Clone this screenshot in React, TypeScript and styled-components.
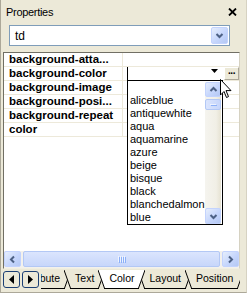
import React from "react";
import styled, { createGlobalStyle } from "styled-components";

const GlobalStyle = createGlobalStyle`
  html, body {
    margin: 0;
    padding: 0;
    background: #ece9d8;
  }
  * {
    box-sizing: border-box;
  }
`;

const FONT = `"Liberation Sans", Arial, sans-serif`;

const colorNames = [
  "",
  "aliceblue",
  "antiquewhite",
  "aqua",
  "aquamarine",
  "azure",
  "beige",
  "bisque",
  "black",
  "blanchedalmon",
  "blue",
];

const properties = [
  "background-atta...",
  "background-color",
  "background-image",
  "background-posi...",
  "background-repeat",
  "color",
];

const tabs = ["Attribute", "Text", "Color", "Layout", "Position"];

const Panel = styled.div`
  width: 247px;
  height: 293px;
  background: #ece9d8;
  border-left: 1px solid #aca899;
  border-right: 1px solid #d6d2c2;
  border-bottom: 1px solid #aca899;
  display: flex;
  flex-direction: column;
  font-family: ${FONT};
  color: #000;
  overflow: hidden;
`;

const TitleBar = styled.div`
  height: 22px;
  display: flex;
  align-items: center;
  justify-content: space-between;
  padding: 1px 9px 0 5px;
  font-size: 11px;
  letter-spacing: -0.3px;
`;

const CloseButton = styled.svg`
  width: 9px;
  height: 8px;
`;

const ComboRow = styled.div`
  padding: 3px 16px 6px 8px;
`;

const Combo = styled.div`
  height: 21px;
  background: #fff;
  border: 1px solid #7f9db9;
  display: flex;
  align-items: center;
  justify-content: space-between;
  padding: 1px;
`;

const ComboText = styled.span`
  font-size: 12px;
  padding-left: 4px;
`;

const XpButton = styled.div<{ $w: number; $h: number }>`
  width: ${(p) => p.$w}px;
  height: ${(p) => p.$h}px;
  border: 1px solid #c3d3fd;
  border-radius: 2px;
  background: linear-gradient(135deg, #e6eefc 0%, #c6d6fc 55%, #b4c8f4 100%);
  display: flex;
  align-items: center;
  justify-content: center;
  flex-shrink: 0;
`;

const Grid = styled.div`
  margin: 0 6px 0 2px;
  height: 217px;
  border-top: 1px solid #716f64;
  border-left: 1px solid #716f64;
  border-right: 1px solid #d6d2c2;
  border-bottom: 1px solid #f1efe2;
  background: #fff;
  display: flex;
  flex-direction: column;
`;

const Rows = styled.div`
  flex: 1;
  position: relative;
`;

const Row = styled.div`
  height: 14px;
  display: flex;
  border-bottom: 1px solid #ede9da;
`;

const NameCell = styled.div`
  width: 119px;
  border-right: 1px solid #ede9da;
  padding-left: 5px;
  font-size: 11.5px;
  font-weight: bold;
  line-height: 13px;
  white-space: nowrap;
  overflow: hidden;
`;

const ValueCell = styled.div`
  flex: 1;
  position: relative;
  display: flex;
`;

const Editor = styled.div`
  margin-left: 4px;
  width: 96px;
  height: 14px;
  border-left: 1px solid #000;
  display: flex;
  justify-content: flex-end;
  align-items: flex-start;
  padding: 2px 5px 0 0;
`;

const EllipsisButton = styled.div`
  width: 15px;
  height: 13px;
  margin-left: 1px;
  background: #ece9d8;
  border: 1px solid;
  border-color: #fff #aca899 #aca899 #fff;
  font-size: 10px;
  font-weight: bold;
  line-height: 6px;
  text-align: center;
  letter-spacing: -0.5px;
`;

const DropList = styled.div`
  position: absolute;
  left: 4px;
  top: 13px;
  width: 96px;
  height: 145px;
  border: 1px solid #000;
  background: #fff;
  display: flex;
  z-index: 5;
`;

const ListItems = styled.div`
  flex: 1;
  display: flex;
  flex-direction: column;
`;

const ListItem = styled.div`
  height: 13px;
  padding-left: 2px;
  font-size: 11px;
  line-height: 13px;
  white-space: nowrap;
  overflow: hidden;
`;

const VScroll = styled.div`
  width: 16px;
  margin: 1px 1px 0 0;
  background: linear-gradient(90deg, #f5f4ef 0%, #f1efe6 70%, #e6e2d2 100%);
  display: flex;
  flex-direction: column;
  justify-content: space-between;
`;

const VThumb = styled.div`
  margin-top: 2px;
  height: 11px;
  border: 1px solid #b3c8f5;
  border-radius: 2px;
  background: linear-gradient(90deg, #dbe5fd 0%, #c7d6fb 100%);
  display: flex;
  align-items: center;
  justify-content: center;
`;

const VTop = styled.div`
  display: flex;
  flex-direction: column;
`;

const Cursor = styled.svg`
  position: absolute;
  left: 216px;
  top: 26px;
  width: 12px;
  height: 20px;
  z-index: 10;
`;

const HScroll = styled.div`
  height: 17px;
  display: flex;
  align-items: center;
  gap: 2px;
  padding: 0 0 1px 0;
  background: #f3f1ec;
`;

const HThumb = styled.div`
  flex: 1;
  height: 16px;
  border: 1px solid #b3c8f5;
  border-radius: 2px;
  background: linear-gradient(180deg, #dbe5fd 0%, #c7d6fb 100%);
  display: flex;
  align-items: center;
  justify-content: center;
`;

const Grip = styled.div<{ $vertical?: boolean }>`
  display: flex;
  flex-direction: ${(p) => (p.$vertical ? "column" : "row")};
  gap: 1px;
  & > span {
    display: block;
    width: ${(p) => (p.$vertical ? "6px" : "1px")};
    height: ${(p) => (p.$vertical ? "1px" : "6px")};
    background: #eef3fe;
    box-shadow: 1px 1px 0 #8cb0f8;
  }
`;

const TabBar = styled.div`
  margin: 1px 6px 0 2px;
  height: 19px;
  display: flex;
  align-items: flex-start;
`;

const NavButton = styled.div`
  width: 17px;
  height: 17px;
  margin-top: 1px;
  margin-right: 2px;
  border: 1px solid #1c3f74;
  border-radius: 3px;
  background: #ece9d8;
  display: flex;
  align-items: center;
  justify-content: center;
  flex-shrink: 0;
`;

const TabViewport = styled.div`
  flex: 1;
  height: 19px;
  overflow: hidden;
`;

// the strip is scrolled: the first tab is partly hidden on the left
const TabRow = styled.div`
  display: flex;
  margin-left: -31px;
`;

const Tab = styled.div<{ $active: boolean; $z: number }>`
  display: flex;
  margin-right: -7px;
  height: 19px;
  position: relative;
  z-index: ${(p) => (p.$active ? 50 : p.$z)};
  flex-shrink: 0;
`;

const TabLabel = styled.div<{ $active: boolean }>`
  height: 19px;
  padding: 0 4px;
  background: ${(p) => (p.$active ? "#fff" : "#ece9d8")};
  border-bottom: 1px solid #000;
  font-size: 10.5px;
  line-height: 17px;
  white-space: nowrap;
`;

function Chevron({ dir }: { dir: "up" | "down" | "left" | "right" }) {
  const rot = { up: 180, down: 0, left: 90, right: -90 }[dir];
  return (
    <svg width="9" height="9" viewBox="0 0 9 9" style={{ transform: `rotate(${rot}deg)` }}>
      <path d="M1.5 3 L4.5 6 L7.5 3" fill="none" stroke="#4d6185" strokeWidth="2" />
    </svg>
  );
}

function TabEdge({ side, fill }: { side: "left" | "right"; fill: string }) {
  return (
    <svg width="7" height="19" viewBox="0 0 7 19" style={{ flexShrink: 0, display: "block" }}>
      {side === "left" ? (
        <>
          <polygon points="0,0 7,0 7,19 6.5,19" fill={fill} />
          <line x1="0" y1="0" x2="6.6" y2="18.5" stroke="#000" strokeWidth="1" />
          <line x1="6" y1="18.5" x2="7" y2="18.5" stroke="#000" strokeWidth="1" />
        </>
      ) : (
        <>
          <polygon points="0,0 7,0 0.5,19 0,19" fill={fill} />
          <line x1="7" y1="0" x2="0.4" y2="18.5" stroke="#000" strokeWidth="1" />
          <line x1="0" y1="18.5" x2="1" y2="18.5" stroke="#000" strokeWidth="1" />
        </>
      )}
    </svg>
  );
}

export default function App() {
  return (
    <>
      <GlobalStyle />
      <Panel>
        <TitleBar>
          <span>Properties</span>
          <CloseButton viewBox="0 0 9 8">
            <path d="M1 0.5 L8 7.5 M8 0.5 L1 7.5" stroke="#000" strokeWidth="1.8" />
          </CloseButton>
        </TitleBar>
        <ComboRow>
          <Combo>
            <ComboText>td</ComboText>
            <XpButton $w={17} $h={17}>
              <Chevron dir="down" />
            </XpButton>
          </Combo>
        </ComboRow>
        <Grid>
          <Rows>
            {properties.map((name, i) => (
              <Row key={name}>
                <NameCell>{name}</NameCell>
                <ValueCell>
                  {i === 1 && (
                    <>
                      <Editor>
                        <svg width="7" height="4" viewBox="0 0 7 4">
                          <polygon points="0,0 7,0 3.5,4" fill="#000" />
                        </svg>
                      </Editor>
                      <EllipsisButton>...</EllipsisButton>
                      <DropList>
                        <ListItems>
                          {colorNames.map((c, j) => (
                            <ListItem key={j}>{c}</ListItem>
                          ))}
                        </ListItems>
                        <VScroll>
                          <VTop>
                            <XpButton $w={16} $h={15}>
                              <Chevron dir="up" />
                            </XpButton>
                            <VThumb>
                              <Grip $vertical>
                                <span />
                              </Grip>
                            </VThumb>
                          </VTop>
                          <XpButton $w={16} $h={16}>
                            <Chevron dir="down" />
                          </XpButton>
                        </VScroll>
                      </DropList>
                    </>
                  )}
                </ValueCell>
              </Row>
            ))}
            <Cursor viewBox="0 0 12 20">
              <path
                d="M0.5 0.5 L0.5 16 L4 12.5 L6.5 18.5 L8.5 17.6 L6 11.6 L11 11.6 Z"
                fill="#fff"
                stroke="#000"
                strokeWidth="1"
                strokeLinejoin="miter"
              />
            </Cursor>
          </Rows>
          <HScroll>
            <XpButton $w={17} $h={16}>
              <Chevron dir="left" />
            </XpButton>
            <HThumb>
              <Grip>
                <span />
                <span />
                <span />
                <span />
              </Grip>
            </HThumb>
            <XpButton $w={17} $h={16}>
              <Chevron dir="right" />
            </XpButton>
          </HScroll>
        </Grid>
        <TabBar>
          <NavButton>
            <svg width="5" height="9" viewBox="0 0 5 9">
              <polygon points="5,0 5,9 0,4.5" fill="#000" />
            </svg>
          </NavButton>
          <NavButton>
            <svg width="5" height="9" viewBox="0 0 5 9">
              <polygon points="0,0 0,9 5,4.5" fill="#000" />
            </svg>
          </NavButton>
          <TabViewport>
            <TabRow>
              {tabs.map((t, i) => {
                const active = t === "Color";
                const fill = active ? "#fff" : "#ece9d8";
                return (
                  <Tab key={t} $active={active} $z={i + 1}>
                    <TabEdge side="left" fill={fill} />
                    <TabLabel $active={active}>{t}</TabLabel>
                    <TabEdge side="right" fill={fill} />
                  </Tab>
                );
              })}
            </TabRow>
          </TabViewport>
        </TabBar>
      </Panel>
    </>
  );
}
